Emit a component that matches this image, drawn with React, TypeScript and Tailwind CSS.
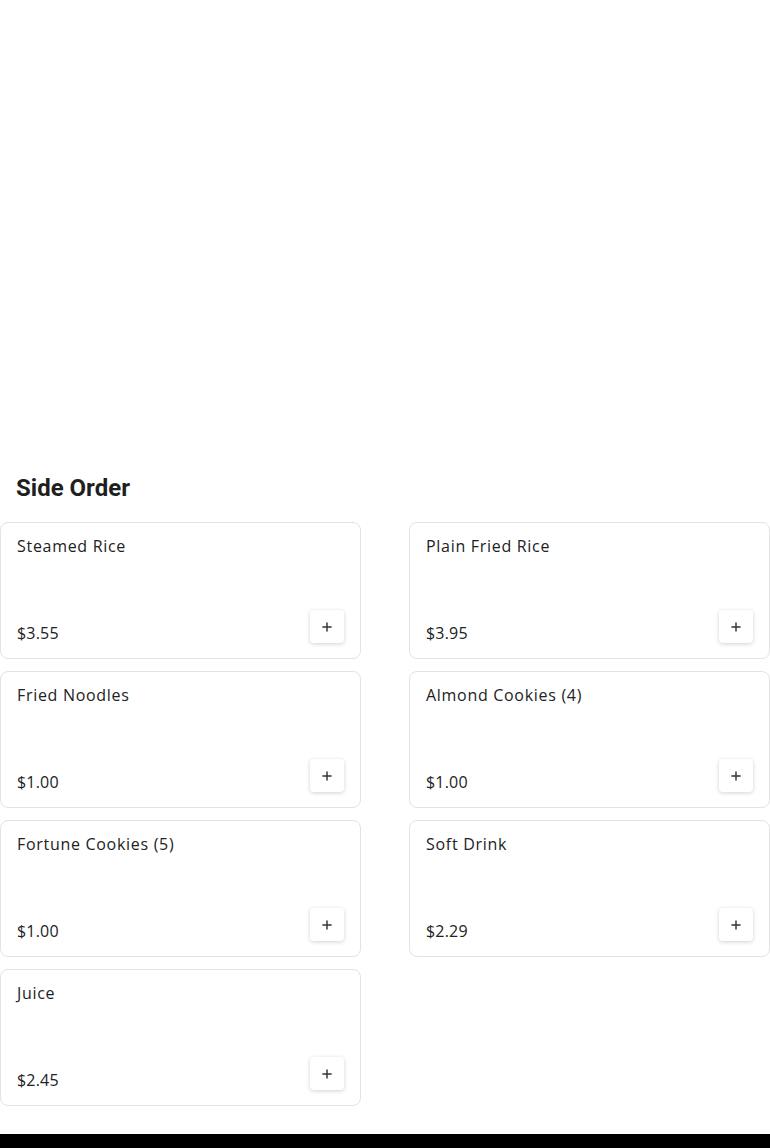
import { Plus } from "lucide-react";

const items = [
  { name: "Steamed Rice", price: "$3.55" },
  { name: "Plain Fried Rice", price: "$3.95" },
  { name: "Fried Noodles", price: "$1.00" },
  { name: "Almond Cookies (4)", price: "$1.00" },
  { name: "Fortune Cookies (5)", price: "$1.00" },
  { name: "Soft Drink", price: "$2.29" },
  { name: "Juice", price: "$2.45" },
];

const ItemCard = ({ name, price }: { name: string; price: string }) => (
  <div className="flex h-[137px] flex-col justify-between rounded-lg border border-[#e3e3e3] bg-white px-4 pb-[13px] pt-[11px]">
    <div className="text-base leading-6 tracking-[0.7px] text-[#222]">{name}</div>
    <div className="flex items-end justify-between">
      <span className="text-base leading-6 tracking-[0.2px] text-[#222]">{price}</span>
      <button
        className="mb-[2px] grid h-[33px] w-[34px] place-items-center rounded-[4px] bg-white text-[#333] shadow-[0_1px_4px_rgba(0,0,0,0.18)]"
        aria-label={`Add ${name}`}
      >
        <Plus size={14} strokeWidth={2.5} />
      </button>
    </div>
  </div>
);

export default function App() {
  return (
    <div className="min-h-screen bg-white" style={{ fontFamily: "'Open Sans', 'Liberation Sans', sans-serif" }}>
      {/* banner area (empty) */}
      <div className="h-[472px]" />

      <section>
        <h2 className="mb-[18px] px-4 font-['Roboto',sans-serif] text-2xl leading-8 font-bold text-[#1f1f1f]">
          Side Order
        </h2>
        <div className="grid grid-cols-2 gap-x-12 gap-y-3">
          {items.map((it) => (
            <ItemCard key={it.name} name={it.name} price={it.price} />
          ))}
        </div>
      </section>

      <footer className="mt-7 h-16 bg-black" />
    </div>
  );
}
